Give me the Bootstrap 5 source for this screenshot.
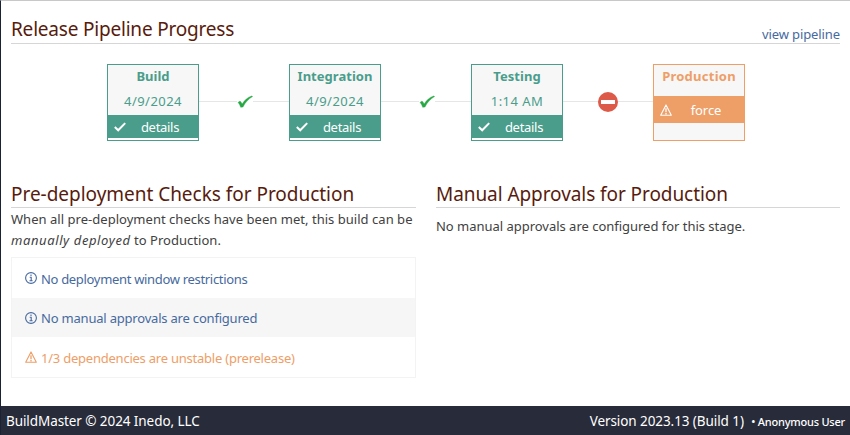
<!DOCTYPE html>
<html lang="en">
<head>
<meta charset="utf-8">
<meta name="viewport" content="width=device-width, initial-scale=1">
<title>BuildMaster</title>
<link href="https://cdn.jsdelivr.net/npm/bootstrap@5.3.0/dist/css/bootstrap.min.css" rel="stylesheet">
<style>
body{font:13px/21px "Noto Sans","Open Sans",sans-serif;color:#414141;background:#fff;letter-spacing:.03px}
.shell{height:435px;border-left:1px solid #1b2233;border-top:1px solid #c8c8c8;overflow:hidden}
.section-head{border-bottom:1px solid #d6d6d6}
.section-head h2{font-size:19px;line-height:26px;font-weight:400;color:#581b0d;margin:0;white-space:nowrap}
.top-head{height:43px;margin:0 10px}
.top-head h2{letter-spacing:-.2px;margin-bottom:1px}
.top-head .link-blue{line-height:17px;letter-spacing:-.1px}
.link-blue{color:#466a9e;text-decoration:none}
.pipeline{margin:20px 0 0 106px}
.stage{width:92px;height:77px;border:1px solid #4a9d8b;background:#f7f7f7;color:#4a9d8b;flex:none}
.stage-name{font-weight:700;line-height:22px;height:25px;text-align:center}
.stage-time{line-height:22px;height:25px;text-align:center;letter-spacing:.45px}
.stage-action{height:23px;background:#4a9d8b;color:#fff;text-decoration:none}
.stage-action .stage-label{width:68px;text-align:center;line-height:22px;letter-spacing:-.3px}
.stage-action svg{margin-left:6px;flex:none}
.stage-foot{height:2px;background:#fff}
.stage-warn{border-color:#ee9e67;color:#ee9e67}
.stage-warn .stage-name{height:31px;letter-spacing:.25px}
.stage-warn .stage-action{height:27px;background:#ee9e67}
.stage-warn .stage-label{letter-spacing:-.1px;line-height:28px}
.joint{width:90px;height:75px;flex:none}
.joint::before,.joint::after{content:"";height:1px;background:#e6e6e6;flex:1}
.joint::before{flex:0 0 38px}
.joint-stop::before{flex:0 0 35px}
.joint-stop svg{margin-top:1px}
.lower{margin:41px 10px 0 10px;gap:20px}
.checks{width:405px}
.lower .section-head{height:26px}
.lower .section-head h2{line-height:24px}
.checks p{padding-top:1px}
.checks em{letter-spacing:.6px}
.checks h2{letter-spacing:-.03px}
.approvals h2{letter-spacing:-.07px}
.approvals p{letter-spacing:-.02px}
.check-list{border:1px solid #f3f3f3;margin-top:6px;letter-spacing:-.26px}
.check-item{height:40px;padding-left:13px;gap:4px;color:#466a9e}
.check-item span{padding-top:2px}
.check-item:first-child span{letter-spacing:-.32px}
.check-item:nth-child(2){height:39px;background:#f6f6f6}
.check-item:nth-child(2) span{letter-spacing:-.2px}
.check-item.unstable{color:#ee9e67}
.check-item.unstable span{letter-spacing:-.23px}
.foot{height:29px;background:#282b3a;color:#fff;font-size:13.5px;letter-spacing:-.08px;padding:0 5px;line-height:30px}
.foot small{font-size:11px;font-weight:500;letter-spacing:-.22px}
</style>
</head>
<body>
<svg class="d-none">
  <symbol id="tick" viewBox="0 0 16 13"><path d="M1 7.400 3 6c1 .8 1.700 1.900 2.200 3C7.500 5.200 10.800 2 14.800 1l.8.500C11.300 4 8.200 7.500 6 12l-2.300.3C3.200 10.400 2.300 8.700 1 7.400Z" fill="#27a844" stroke="#27a844" stroke-width=".4"/></symbol>
  <symbol id="check" viewBox="0 0 12 10"><path d="M.8 5.100 4.200 8.300 11.200 1.100" fill="none" stroke="#fff" stroke-width="2"/></symbol>
  <symbol id="warn" viewBox="0 0 12 12"><path d="M6 .9 11.300 11.300H.7Z" fill="none" stroke="currentColor" stroke-width="1.100" stroke-linejoin="round"/><path d="M6 4.200V8.200M6 9.100v1.300" stroke="currentColor" stroke-width="1.300"/></symbol>
  <symbol id="info" viewBox="0 0 12 12"><circle cx="6" cy="6" r="5.400" fill="none" stroke="currentColor" stroke-width="1.100"/><path d="M6 2.600v1.500M4.700 5.300H6.200V8.700M4.500 8.800h3.100" fill="none" stroke="currentColor" stroke-width="1.100"/></symbol>
</svg>
<div class="shell d-flex flex-column">
  <header class="section-head top-head d-flex justify-content-between align-items-end">
    <h2>Release Pipeline Progress</h2>
    <a class="link-blue" href="#">view pipeline</a>
  </header>
  <div class="pipeline d-flex">
    <div class="stage"><div class="stage-name">Build</div><div class="stage-time">4/9/2024</div>
      <a class="stage-action d-flex align-items-center" href="#"><svg width="12" height="10"><use href="#check"/></svg><span class="stage-label">details</span></a><div class="stage-foot"></div></div>
    <div class="joint d-flex align-items-center"><svg width="16" height="13"><use href="#tick"/></svg></div>
    <div class="stage"><div class="stage-name">Integration</div><div class="stage-time">4/9/2024</div>
      <a class="stage-action d-flex align-items-center" href="#"><svg width="12" height="10"><use href="#check"/></svg><span class="stage-label">details</span></a><div class="stage-foot"></div></div>
    <div class="joint d-flex align-items-center"><svg width="16" height="13"><use href="#tick"/></svg></div>
    <div class="stage"><div class="stage-name">Testing</div><div class="stage-time">1:14 AM</div>
      <a class="stage-action d-flex align-items-center" href="#"><svg width="12" height="10"><use href="#check"/></svg><span class="stage-label">details</span></a><div class="stage-foot"></div></div>
    <div class="joint joint-stop d-flex align-items-center"><svg width="20" height="20"><circle cx="10" cy="10" r="10" fill="#de5a48"/><rect x="3" y="8" width="14" height="4" fill="#fff"/></svg></div>
    <div class="stage stage-warn"><div class="stage-name">Production</div>
      <a class="stage-action d-flex align-items-center" href="#"><svg width="12" height="12"><use href="#warn"/></svg><span class="stage-label">force</span></a></div>
  </div>
  <div class="lower d-flex">
    <section class="checks flex-shrink-0">
      <div class="section-head"><h2>Pre-deployment Checks for Production</h2></div>
      <p class="mb-0 text-nowrap">When all pre-deployment checks have been met, this build can be<br><em>manually deployed</em> to Production.</p>
      <div class="check-list">
        <div class="check-item d-flex align-items-center"><svg width="12" height="12"><use href="#info"/></svg><span>No deployment window restrictions</span></div>
        <div class="check-item d-flex align-items-center"><svg width="12" height="12"><use href="#info"/></svg><span>No manual approvals are configured</span></div>
        <div class="check-item unstable d-flex align-items-center"><svg width="12" height="12"><use href="#warn"/></svg><span>1/3 dependencies are unstable (prerelease)</span></div>
      </div>
    </section>
    <section class="approvals flex-grow-1">
      <div class="section-head"><h2>Manual Approvals for Production</h2></div>
      <p class="mb-0 pt-2">No manual approvals are configured for this stage.</p>
    </section>
  </div>
  <footer class="foot d-flex justify-content-between mt-auto">
    <span>BuildMaster © 2024 Inedo, LLC</span>
    <span>Version 2023.13 (Build 1) <small class="ms-1">• Anonymous User</small></span>
  </footer>
</div>
</body>
</html>
